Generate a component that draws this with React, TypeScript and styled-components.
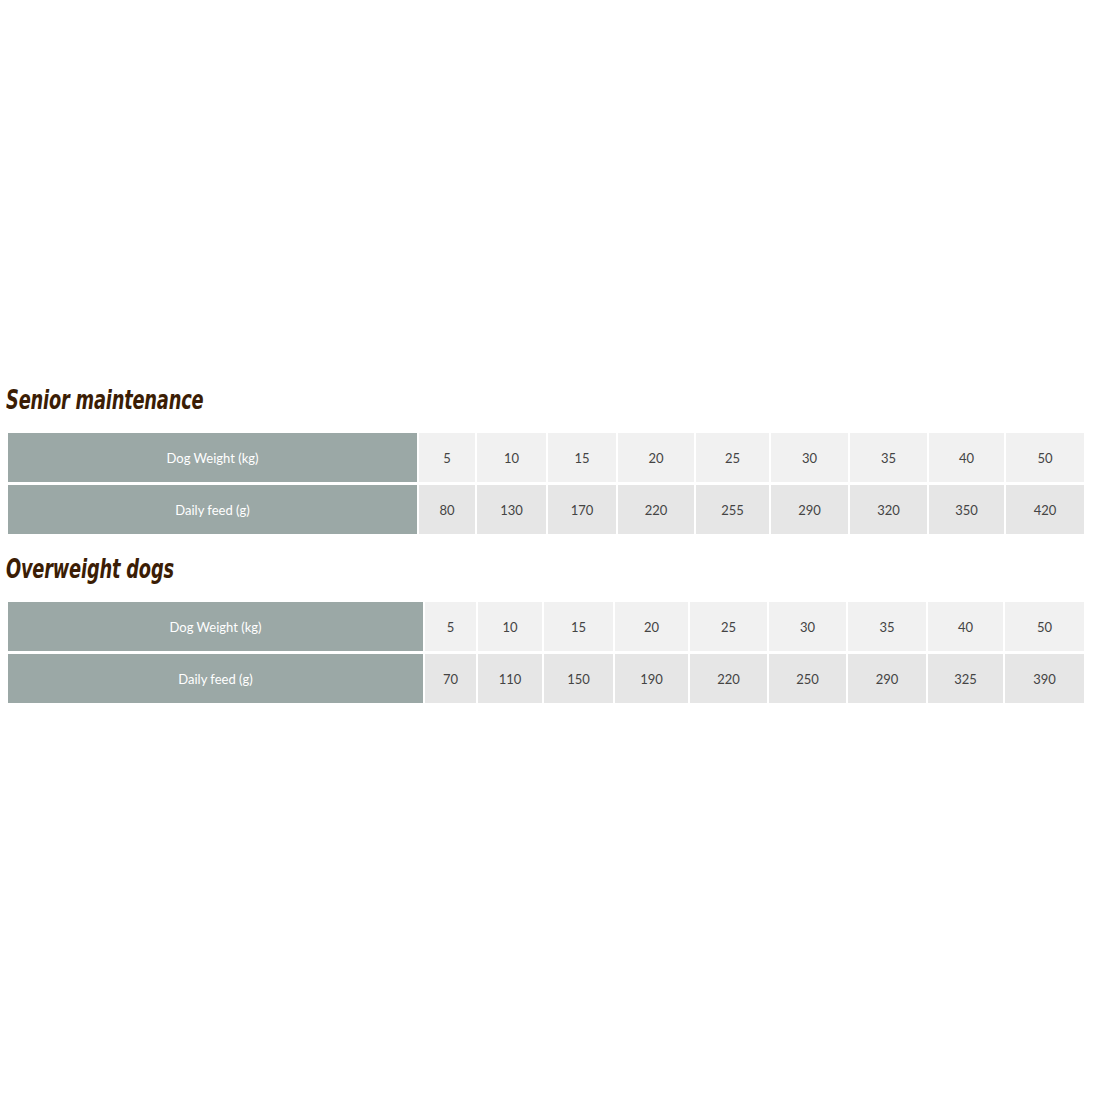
import styled, { createGlobalStyle } from 'styled-components';

const GlobalStyle = createGlobalStyle`
  html, body {
    margin: 0;
    padding: 0;
    background: #ffffff;
  }
  body {
    font-family: "Lato", "Liberation Sans", sans-serif;
  }
`

const Page = styled.main`
  width: 1095px;
  height: 1095px;
  padding-top: 383px;
  box-sizing: border-box;
`

const Section = styled.section`
  display: flex;
  flex-direction: column;
  align-items: flex-start;
  margin-bottom: 15px;
`

// brush-style heading: no such font offline, so squeeze a bold oblique
const Title = styled.h2`
  margin: 0 0 16px 6px;
  font-family: "DejaVu Sans", sans-serif;
  font-style: italic;
  font-weight: bold;
  font-size: 27px;
  line-height: 34px;
  color: #3b1d05;
  letter-spacing: -0.3px;
  white-space: nowrap;
  transform: scaleX(0.66);
  transform-origin: left center;
`

const Table = styled.table`
  margin-left: 6px;
  width: 1080px;
  table-layout: fixed;
  border-collapse: separate;
  border-spacing: 2px 3px;
  margin-top: -3px;
`

const Col = styled.col<{ $w: number }>`
  width: ${p => p.$w}px;
`

const Label = styled.th`
  height: 49px;
  padding: 0;
  background: #9ba8a6;
  color: #ffffff;
  font-weight: normal;
  font-size: 13px;
  text-align: center;
  vertical-align: middle;
`

const Cell = styled.td<{ $alt?: boolean }>`
  height: 49px;
  padding: 0;
  background: ${p => (p.$alt ? '#e6e6e6' : '#f1f1f1')};
  color: #444444;
  font-size: 13px;
  text-align: center;
  vertical-align: middle;
`

type Feed = {
  title: string
  widths: number[]
  weights: number[]
  feed: number[]
}

const tables: Feed[] = [
  {
    title: 'Senior maintenance',
    widths: [409, 56, 69, 68, 76, 73, 77, 77, 75, 78],
    weights: [5, 10, 15, 20, 25, 30, 35, 40, 50],
    feed: [80, 130, 170, 220, 255, 290, 320, 350, 420],
  },
  {
    title: 'Overweight dogs',
    widths: [415, 51, 64, 69, 73, 77, 77, 78, 75, 79],
    weights: [5, 10, 15, 20, 25, 30, 35, 40, 50],
    feed: [70, 110, 150, 190, 220, 250, 290, 325, 390],
  },
]

function FeedTable({ data }: { data: Feed }) {
  return (
    <Section>
      <Title>{data.title}</Title>
      <Table>
        <colgroup>
          {data.widths.map((w, i) => <Col key={i} $w={w} />)}
        </colgroup>
        <tbody>
          <tr>
            <Label>Dog Weight (kg)</Label>
            {data.weights.map(v => <Cell key={v}>{v}</Cell>)}
          </tr>
          <tr>
            <Label>Daily feed (g)</Label>
            {data.feed.map((v, i) => <Cell key={i} $alt>{v}</Cell>)}
          </tr>
        </tbody>
      </Table>
    </Section>
  )
}

export default function App() {
  return (
    <Page>
      <GlobalStyle />
      {tables.map(t => <FeedTable key={t.title} data={t} />)}
    </Page>
  )
}
